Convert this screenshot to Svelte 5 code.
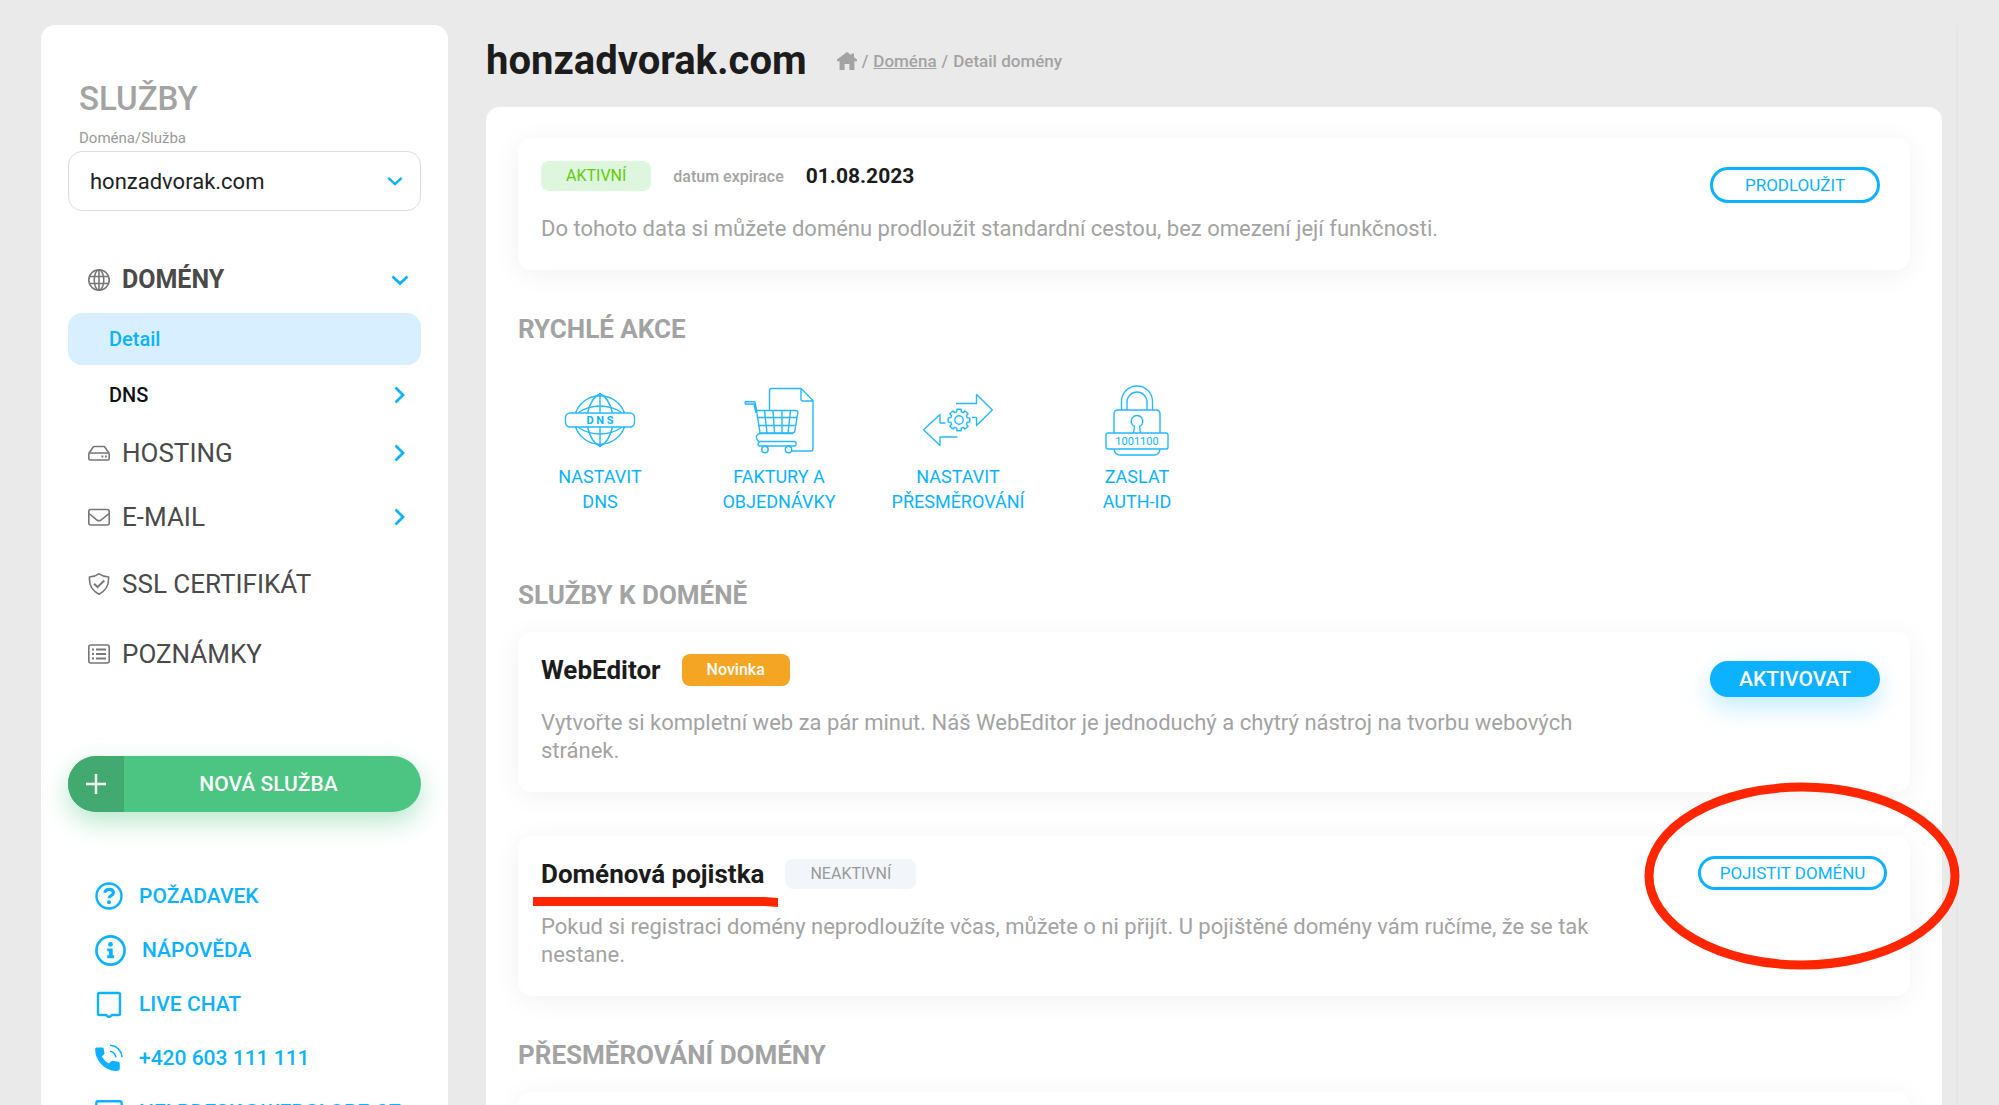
<script lang="ts">
	type NavItem = { label: string; icon: string; expandable?: boolean };

	const navItems: NavItem[] = [
		{ label: 'HOSTING', icon: 'disk', expandable: true },
		{ label: 'E-MAIL', icon: 'mail', expandable: true },
		{ label: 'SSL CERTIFIKÁT', icon: 'shield' },
		{ label: 'POZNÁMKY', icon: 'notes' }
	];

	const contacts = [
		{ label: 'POŽADAVEK', icon: 'question' },
		{ label: 'NÁPOVĚDA', icon: 'info' },
		{ label: 'LIVE CHAT', icon: 'chat' },
		{ label: '+420 603 111 111', icon: 'phone' },
		{ label: 'HELPDESK@WEBGLOBE.CZ', icon: 'envelope' }
	];

	const quickActions = [
		{ lines: ['NASTAVIT', 'DNS'], icon: 'dns' },
		{ lines: ['FAKTURY A', 'OBJEDNÁVKY'], icon: 'cart' },
		{ lines: ['NASTAVIT', 'PŘESMĚROVÁNÍ'], icon: 'redirect' },
		{ lines: ['ZASLAT', 'AUTH-ID'], icon: 'lock' }
	];

	let service = $state('honzadvorak.com');

	// Outline of an eight-toothed gear around the given centre
	function gearPath(cx: number, cy: number, outer: number, inner: number) {
		const points: string[] = [];
		for (let tooth = 0; tooth < 8; tooth++) {
			const corners = [
				[-15, inner],
				[-11, outer],
				[11, outer],
				[15, inner]
			];
			for (const [offset, radius] of corners) {
				const angle = ((tooth * 45 + offset) * Math.PI) / 180;
				points.push(`${cx + radius * Math.cos(angle)},${cy + radius * Math.sin(angle)}`);
			}
		}
		return `M${points.join('L')}Z`;
	}
</script>

{#snippet chevron(direction: string)}
	<svg class="chevron" viewBox="0 0 18 18" aria-hidden="true">
		<path d={direction === 'down' ? 'M1.5 5.5L9 12.5l7.5-7' : 'M4.500 1.500L12 9l-7.500 7.500'} />
	</svg>
{/snippet}

{#snippet navIcon(name: string)}
	<svg class="nav-icon" viewBox="0 0 22 22" aria-hidden="true">
		{#if name === 'globe'}
			<circle cx="11" cy="11" r="10.2" />
			<ellipse cx="11" cy="11" rx="4.8" ry="10.2" />
			<path d="M11 .8v20.4M1.8 7.5h18.4M1.8 14.5h18.4" />
		{:else if name === 'disk'}
			<path d="M.8 11.5L5 5.2q.5-.7 1.4-.7h9.2q.9 0 1.4.7l4.2 6.3" />
			<rect x=".8" y="11" width="20.4" height="7" rx="1.5" />
			<path d="M13.5 14.6h1.8M17 14.6h1.8" stroke-width="2" />
		{:else if name === 'mail'}
			<rect x=".8" y="3.5" width="20.4" height="15.5" rx="2" />
			<path d="M1 7.5l8 6.5q2 1.5 4 0l8-6.5" />
		{:else if name === 'shield'}
			<path d="M11 .8q4.5 3 9.5 3.2Q21.5 16 11 21.2.5 16 1.5 4 6.5 3.8 11 .8z" />
			<path d="M6 10.8l3.6 3.4 6.6-6.7" stroke-width="2" />
		{:else}
			<rect x=".8" y="2" width="20.4" height="18" rx="2" />
			<path d="M4 6.5h2M4 11h2M4 15.5h2M8 6.5h10M8 11h10M8 15.5h10" stroke-width="1.8" />
		{/if}
	</svg>
{/snippet}

{#snippet contactIcon(name: string)}
	<svg class="contact-icon" class:big={name === 'info'} viewBox="0 0 28 28" aria-hidden="true">
		{#if name === 'question'}
			<circle cx="14" cy="14" r="12.5" />
			<path d="M9.8 10.8q.6-3.4 4.4-3.4 4.2 0 4.2 3.2 0 1.9-2.2 3-2 1-2 2.6" stroke-width="3.2" />
			<circle class="solid" cx="14" cy="20.2" r="2" />
		{:else if name === 'info'}
			<circle cx="14" cy="14" r="12.7" />
			<circle class="solid" cx="14" cy="8.5" r="2.2" />
			<path class="solid" d="M11 12.2h5v6.2h1.3V21H11v-2.6h1.5v-3.7H11z" />
		{:else if name === 'chat'}
			<path d="M4.5 3h19Q25 3 25 4.5v19q0 1.5-1.5 1.5H17l-3 2.4-3-2.4H4.5Q3 25 3 23.5v-19Q3 3 4.5 3z" />
		{:else if name === 'phone'}
			<path
				class="solid"
				d="M1.5 3.5h5.8q1.3 0 1.5 1.3l.6 4.2q.1.9-.5 1.5l-2.1 2q2.6 4.6 7 7l2.3-2.2q.6-.6 1.5-.5l5.7.9q1.500.2 1.500 1.700v5q0 2.200-2 2.400Q14 28 6.500 20.500-.2 13 .2 5q.1-1.300 1.300-1.500z"
			/>
			<path d="M15 7.3q4.800.6 6 6M15 1.200q10.500.8 12.200 12" stroke-width="1.6" />
		{:else}
			<rect x="1.3" y="3.3" width="25.4" height="20" rx="2" />
			<path d="M2 8l12 9 12-9" />
		{/if}
	</svg>
{/snippet}

{#snippet actionIcon(name: string)}
	<svg class="action-icon" viewBox="0 0 72 72" aria-hidden="true">
		{#if name === 'dns'}
			<path d="M11.5 29a26 26 0 0 1 49 0M11.5 43a26 26 0 0 0 49 0" />
			<path d="M23.5 29Q27 14 36 9.500 45 14 48.500 29M23.500 43Q27 58 36 62.500 45 58 48.500 43" />
			<path d="M36 9.500V29M36 43v19.500" />
			<path d="M14.500 28.500Q24 22 36 22t21.500 6.500M14.500 43.500Q24 50 36 50t21.500-6.500" />
			<rect x="1.5" y="29" width="69" height="14" rx="4.5" />
			<text class="bold" x="36" y="39.500">D N S</text>
		{:else if name === 'cart'}
			<path d="M26.500 26V6.500q0-2 2-2H58l12 12V65q0 2-2 2H49M58 4.500V15q0 2 2 2h10" />
			<path d="M13 29l-2-9H2.500q-1-1.200 0-2.200h8.500q1 0 1.300 1.200L17 48.500" />
			<path d="M12.800 26.500h40q2.500 0 2 2.500l-3 18q-.3 2-2.500 2H16" />
			<path d="M21.500 26.500l2.500 22.500M30 26.500l1.500 22.500M39 26.500V49M47.500 26.500L45 49M13.800 33.500H54M15 41.500h38" />
			<path d="M50 49.500H18.500q-5.500 0-5 4 .5 4 4 4H51.500q1.600 0 1.600 2.200t-1.600 2.300H17q-2 0-2-2t2-2.500" />
			<circle cx="22" cy="65.500" r="3.2" />
			<circle cx="45.500" cy="65.500" r="3.2" />
		{:else if name === 'redirect'}
			<path d="M34 19.500h20.500v-9l15.800 15.500-15.800 15.500v-8H50" />
			<path d="M35.500 53H18v8.500L1.500 45.700 18 30.500v8.500h5.500" />
			<circle cx="37" cy="36" r="4.2" />
			<path d={gearPath(37, 36, 11, 8.5)} />
		{:else}
			<path d="M20.500 26V17.500a15.500 15.500 0 0 1 31 0V26M26 26V18a10 10 0 0 1 20 0v8" />
			<path d="M13 49V30q0-4 4-4h38q4 0 4 4v19" />
			<path d="M32.500 49l1-6.500a5.800 5.800 0 1 1 5 0l1 6.500" />
			<rect x="5" y="49" width="62" height="16" rx="2" />
			<path d="M13 65q.5 6 6 6h34q5.500 0 6-6" />
			<text x="36" y="60.500">1001100</text>
		{/if}
	</svg>
{/snippet}

<div class="page">
	<div class="layout">
		<aside class="sidebar">
			<h2 class="sidebar-title">SLUŽBY</h2>
			<label class="select-label" for="service">Doména/Služba</label>
			<div class="select-box">
				<select id="service" bind:value={service}>
					<option value="honzadvorak.com">honzadvorak.com</option>
				</select>
				{@render chevron('down')}
			</div>

			<nav class="nav">
				<a class="nav-row group" href="#domeny">
					{@render navIcon('globe')}
					<span>DOMÉNY</span>
					{@render chevron('down')}
				</a>
				<a class="sub-row active" href="#detail"><span>Detail</span></a>
				<a class="sub-row" href="#dns"><span>DNS</span>{@render chevron('right')}</a>
				{#each navItems as item (item.label)}
					<a class="nav-row" class:expandable={item.expandable} href="#{item.icon}">
						{@render navIcon(item.icon)}
						<span>{item.label}</span>
						{#if item.expandable}
							{@render chevron('right')}
						{/if}
					</a>
				{/each}
			</nav>

			<button class="new-service" type="button">
				<span class="plus">
					<svg viewBox="0 0 20 20" aria-hidden="true"><path d="M10 0v20M0 10h20" /></svg>
				</span>
				<span class="new-label">NOVÁ SLUŽBA</span>
			</button>

			<div class="contacts">
				{#each contacts as contact (contact.label)}
					<a class="contact" href="#{contact.icon}">
						{@render contactIcon(contact.icon)}
						<span>{contact.label}</span>
					</a>
				{/each}
			</div>
		</aside>

		<main class="content">
			<header class="header">
				<h1>honzadvorak.com</h1>
				<div class="breadcrumb">
					<a class="home" href="#home" aria-label="Domů">
						<svg viewBox="0 0 20 18" aria-hidden="true">
							<path d="M10 0L0 7.500v1.800h2.600V18h5v-6h4.800v6h5V9.300H20V7.500l-3-2.200V1.500h-2.600v1.800z" />
						</svg>
					</a>
					<span>/</span>
					<a href="#domena">Doména</a>
					<span>/</span>
					<span>Detail domény</span>
				</div>
			</header>

			<div class="panel">
				<section class="card">
					<div class="card-body">
						<div class="card-head">
							<span class="badge green">AKTIVNÍ</span>
							<span class="expiry-label">datum expirace</span>
							<strong class="expiry-date">01.08.2023</strong>
						</div>
						<p>Do tohoto data si můžete doménu prodloužit standardní cestou, bez omezení její funkčnosti.</p>
					</div>
					<div class="card-action">
						<button class="pill outline" type="button">PRODLOUŽIT</button>
					</div>
				</section>

				<h2 class="section-title">RYCHLÉ AKCE</h2>
				<div class="quick-actions">
					{#each quickActions as action (action.icon)}
						<a class="quick-action" href="#{action.icon}">
							{@render actionIcon(action.icon)}
							<span>{action.lines[0]}<br />{action.lines[1]}</span>
						</a>
					{/each}
				</div>

				<h2 class="section-title">SLUŽBY K DOMÉNĚ</h2>
				<section class="card">
					<div class="card-body">
						<div class="card-head">
							<h3>WebEditor</h3>
							<span class="badge orange">Novinka</span>
						</div>
						<p>
							Vytvořte si kompletní web za pár minut. Náš WebEditor je jednoduchý a chytrý nástroj na tvorbu
							webových stránek.
						</p>
					</div>
					<div class="card-action">
						<button class="pill filled" type="button">AKTIVOVAT</button>
					</div>
				</section>

				<section class="card insurance">
					<div class="card-body">
						<div class="card-head">
							<h3 class="underlined">
								Doménová pojistka
								<svg class="underline" viewBox="0 0 246 10" preserveAspectRatio="none" aria-hidden="true">
									<path d="M0 0h232l14 1v9l-14-1H0z" />
								</svg>
							</h3>
							<span class="badge grey">NEAKTIVNÍ</span>
						</div>
						<p>
							Pokud si registraci domény neprodloužíte včas, můžete o ni přijít. U pojištěné domény vám
							ručíme, že se tak nestane.
						</p>
					</div>
					<div class="card-action">
						<div class="circled">
							<button class="pill outline wide" type="button">POJISTIT DOMÉNU</button>
							<svg class="ellipse" viewBox="0 0 316 188" aria-hidden="true">
								<ellipse cx="158" cy="94" rx="153" ry="89" />
							</svg>
						</div>
					</div>
				</section>

				<h2 class="section-title">PŘESMĚROVÁNÍ DOMÉNY</h2>
				<section class="card"></section>
			</div>
		</main>
	</div>
</div>

<style>
	:global(body) {
		background: #eaeaea;
		font-family: Roboto, 'Liberation Sans', sans-serif;
		color: #1c1c1c;
	}

	h1,
	h2,
	h3,
	p {
		margin: 0;
	}

	a {
		color: inherit;
		text-decoration: none;
	}

	button,
	select {
		font-family: inherit;
		cursor: pointer;
	}

	svg {
		flex-shrink: 0;
		fill: none;
	}

	.page {
		height: 100vh;
		padding: 25px 41px 0;
		box-sizing: border-box;
		overflow: hidden;
	}

	.layout {
		display: flex;
		align-items: stretch;
		gap: 38px;
		min-height: 100%;
		border-right: 2px solid #e5e5e5;
	}

	/* Sidebar */
	.sidebar {
		flex: 0 0 407px;
		padding: 50px 27px 40px;
		box-sizing: border-box;
		border-radius: 14px 14px 0 0;
		background: #fff;
	}

	.sidebar-title {
		padding-left: 11px;
		font-size: 33px;
		font-weight: 500;
		line-height: 48px;
		color: #a3a3a3;
	}

	.select-label {
		display: block;
		padding: 5px 11px 3px;
		font-size: 15px;
		line-height: 20px;
		color: #999;
	}

	.select-box {
		position: relative;
	}

	.select-box select {
		width: 100%;
		height: 60px;
		padding: 0 50px 0 21px;
		border: 1px solid #dedede;
		border-radius: 14px;
		background: #fff;
		font-size: 22px;
		color: #222;
		appearance: none;
	}

	.select-box .chevron {
		position: absolute;
		top: 22px;
		right: 18px;
		width: 16px;
		height: 16px;
		pointer-events: none;
	}

	.chevron {
		width: 18px;
		height: 18px;
		margin-left: auto;
		stroke: #0cb2ff;
		stroke-width: 2.8;
	}

	.nav {
		padding-top: 35px;
	}

	.nav-row {
		display: flex;
		align-items: center;
		gap: 12px;
		height: 70px;
		padding: 0 12px 0 20px;
		font-size: 26px;
		color: #4a4a4a;
	}

	.nav-row.expandable {
		height: 64px;
	}

	.nav-row.group {
		height: 67px;
		font-size: 25px;
		font-weight: 700;
	}

	.nav-icon {
		width: 22px;
		height: 22px;
		stroke: #777;
		stroke-width: 1.6;
	}

	.sub-row {
		display: flex;
		align-items: center;
		height: 52px;
		padding: 0 12px 0 41px;
		border-radius: 14px;
		font-size: 20px;
		font-weight: 500;
		color: #111;
	}

	.sub-row.active {
		margin-bottom: 4px;
		background: #d7efff;
		color: #0cb2ff;
	}

	.new-service {
		display: flex;
		align-items: stretch;
		width: 100%;
		height: 56px;
		margin-top: 67px;
		padding: 0;
		overflow: hidden;
		border: none;
		border-radius: 28px;
		background: #4cc482;
		box-shadow: 0 10px 26px rgba(76, 196, 130, 0.4);
		color: #fff;
	}

	.plus {
		display: grid;
		place-items: center;
		width: 56px;
		background: #42aa71;
	}

	.plus svg {
		width: 20px;
		height: 20px;
		stroke: #fff;
		stroke-width: 2.4;
	}

	.new-label {
		flex: 1;
		align-self: center;
		padding-right: 8px;
		font-size: 21px;
		font-weight: 500;
	}

	.contacts {
		padding: 57px 0 0 27px;
	}

	.contact {
		display: flex;
		align-items: center;
		gap: 16px;
		height: 54px;
		font-size: 21px;
		font-weight: 500;
		white-space: nowrap;
		color: #0cb2ff;
	}

	.contact-icon {
		width: 28px;
		height: 28px;
		stroke: #0cb2ff;
		stroke-width: 2.4;
	}

	.contact-icon.big {
		width: 31px;
		height: 31px;
	}

	.solid {
		fill: #0cb2ff;
		stroke: none;
	}

	/* Content */
	.content {
		flex: 1;
		display: flex;
		flex-direction: column;
		min-width: 0;
		margin-right: 14px;
	}

	.header {
		display: flex;
		align-items: center;
		gap: 30px;
		height: 82px;
		padding-bottom: 11px;
		box-sizing: border-box;
	}

	.header h1 {
		font-size: 40px;
		line-height: 48px;
	}

	.breadcrumb {
		display: flex;
		align-items: center;
		gap: 5px;
		font-size: 17px;
		font-weight: 500;
		color: #a3a3a3;
	}

	.breadcrumb a {
		text-decoration: underline;
	}

	.home svg {
		display: block;
		width: 20px;
		height: 18px;
		fill: #a3a3a3;
	}

	.panel {
		flex: 1;
		padding: 31px 32px 0;
		border-radius: 14px 14px 0 0;
		background: #fff;
	}

	.card {
		display: flex;
		justify-content: space-between;
		min-height: 132px;
		padding: 20px 23px 27px;
		box-sizing: border-box;
		border-radius: 14px;
		background: #fff;
		box-shadow: 0 4px 28px rgba(0, 0, 0, 0.06);
	}

	.card-body {
		flex: 0 1 1080px;
		padding-top: 2px;
	}

	.card-head {
		display: flex;
		align-items: center;
		height: 32px;
		margin-bottom: 23px;
	}

	.card p {
		font-size: 22px;
		line-height: 28px;
		color: #a3a3a3;
	}

	.card h3 {
		margin-right: 21px;
		font-size: 26px;
		line-height: 32px;
	}

	.badge {
		padding: 0 25px;
		border-radius: 8px;
		font-size: 16px;
		line-height: 30px;
	}

	.badge.green {
		background: #def6de;
		color: #5fcc08;
	}

	.badge.orange {
		background: #f5a524;
		font-weight: 500;
		line-height: 32px;
		color: #fff;
	}

	.badge.grey {
		background: #f2f6fa;
		color: #999;
	}

	.expiry-label {
		margin: 0 22px;
		font-size: 16px;
		font-weight: 500;
		color: #a3a3a3;
	}

	.expiry-date {
		font-size: 21px;
	}

	.card-action {
		display: flex;
		flex: 0 0 184px;
		align-items: flex-start;
		justify-content: center;
		padding-top: 9px;
	}

	.pill {
		width: 170px;
		height: 36px;
		padding: 0;
		border-radius: 18px;
		white-space: nowrap;
	}

	.pill.outline {
		border: 3px solid #0cb2ff;
		background: #fff;
		font-size: 17px;
		color: #0cb2ff;
	}

	.pill.filled {
		border: none;
		background: #0cb2ff;
		box-shadow: 0 10px 24px rgba(12, 178, 255, 0.25);
		font-size: 21px;
		font-weight: 500;
		color: #fff;
	}

	.pill.wide {
		display: block;
		width: 189px;
		height: 34px;
	}

	.insurance {
		margin-top: 44px;
	}

	.insurance .card-action {
		padding-top: 0;
	}

	/* Hand-drawn red marks over the insurance card */
	.underlined,
	.circled {
		position: relative;
	}

	.underline {
		position: absolute;
		top: 39px;
		left: -8px;
		width: calc(100% + 22px);
		height: 10px;
		fill: #ff2600;
	}

	.ellipse {
		position: absolute;
		top: -74px;
		left: -54px;
		width: 316px;
		height: 188px;
		stroke: #ff2600;
		stroke-width: 9;
		pointer-events: none;
	}

	.section-title {
		padding: 43px 0 21px;
		font-size: 26px;
		line-height: 32px;
		color: #a3a3a3;
	}

	.quick-actions {
		display: grid;
		grid-template-columns: repeat(4, 164px);
		gap: 15px;
		padding: 18px 0 22px;
	}

	.quick-action {
		display: flex;
		flex-direction: column;
		align-items: center;
		gap: 8px;
		font-size: 18px;
		line-height: 25px;
		text-align: center;
		color: #0cb2ff;
	}

	.action-icon {
		width: 72px;
		height: 72px;
		stroke: #25b8ff;
		stroke-width: 1.4;
		stroke-linejoin: round;
	}

	.action-icon text {
		fill: #0cb2ff;
		stroke: none;
		font-size: 11px;
		text-anchor: middle;
	}

	.action-icon .bold {
		font-weight: 700;
	}
</style>
